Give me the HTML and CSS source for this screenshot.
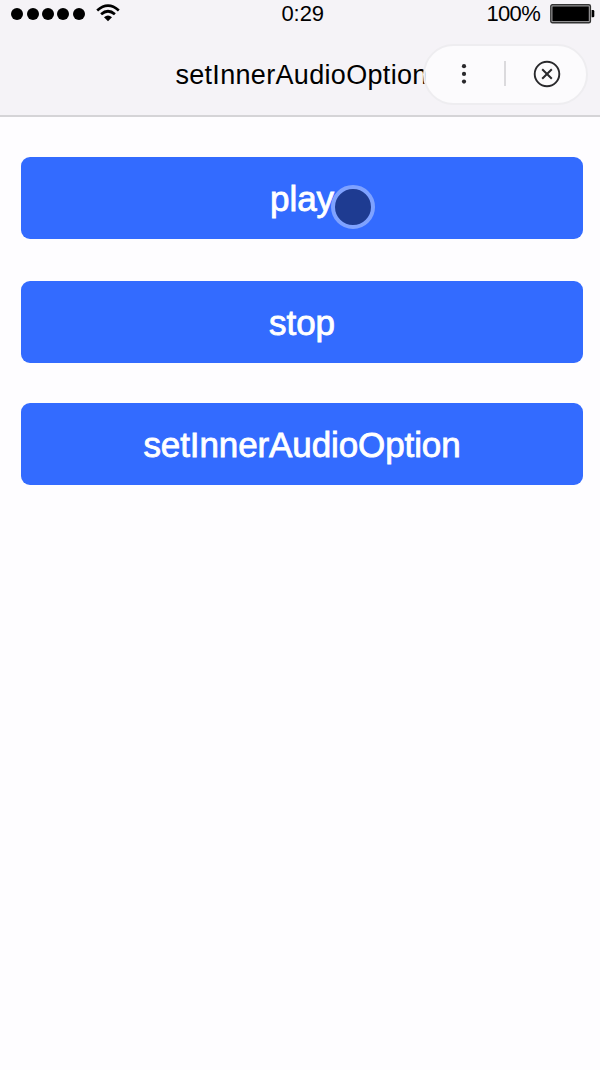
FILE: index.html
```html
<!DOCTYPE html>
<html lang="en">
<head>
  <meta charset="UTF-8">
  <meta name="viewport" content="width=device-width, initial-scale=1.0">
  <title>setInnerAudioOption</title>
  <link rel="stylesheet" href="styles.css">
</head>
<body>
  <header class="header">
    <!-- Status Bar -->
    <div class="status-bar">
      <div class="status-left">
        <div class="signal">
          <span class="signal-dot"></span>
          <span class="signal-dot"></span>
          <span class="signal-dot"></span>
          <span class="signal-dot"></span>
          <span class="signal-dot"></span>
        </div>
        <svg class="wifi" width="24" height="18" viewBox="0 0 24 18">
          <path d="M1.2 6.4 Q12 -3.2 22.8 6.4" fill="none" stroke="#000" stroke-width="2.7"/>
          <path d="M5.1 10.3 Q12 4.2 18.9 10.3" fill="none" stroke="#000" stroke-width="2.7"/>
          <path d="M8 13.2 Q12 9.8 16 13.2 L12 17.2 Z" fill="#000"/>
        </svg>
      </div>
      <div class="status-time">0:29</div>
      <div class="status-right">
        <span class="battery-text">100%</span>
        <svg class="battery" width="45" height="20" viewBox="0 0 45 20">
          <rect x="0.8" y="0.8" width="39.6" height="18" rx="1.5" fill="#b5b4b7" stroke="#333" stroke-width="1.4"/>
          <rect x="2.4" y="2.4" width="36.4" height="14.8" fill="#000"/>
          <path d="M41.6 6 H43 Q44.3 6 44.3 7.3 V12 Q44.3 13.3 43 13.3 H41.6 Z" fill="#000"/>
        </svg>
      </div>
    </div>

    <!-- Navigation Bar -->
    <div class="nav-bar">
      <h1 class="nav-title">setInnerAudioOption</h1>
      <div class="capsule">
        <svg width="6" height="22" viewBox="0 0 6 22">
          <circle cx="3" cy="3.2" r="2.1" fill="#29292c"/>
          <circle cx="3" cy="10.9" r="2.1" fill="#29292c"/>
          <circle cx="3" cy="18.6" r="2.1" fill="#29292c"/>
        </svg>
        <span class="capsule-line"></span>
        <svg width="28" height="28" viewBox="0 0 28 28" fill="none" stroke="#29292c">
          <circle cx="14" cy="14" r="12.3" stroke-width="1.9"/>
          <path d="M9.2 9.2 L18.8 18.8 M18.8 9.2 L9.2 18.8" stroke-width="2"/>
        </svg>
      </div>
    </div>
  </header>

  <main class="content">
    <button class="btn">play<span class="touch"></span></button>
    <button class="btn">stop</button>
    <button class="btn">setInnerAudioOption</button>
  </main>
</body>
</html>
```

FILE: styles.css
```css
* {
  margin: 0;
  padding: 0;
  box-sizing: border-box;
}

body {
  min-height: 1070px;
  background-color: #fefdff;
  font-family: "Liberation Sans", Arial, sans-serif;
  overflow: hidden;
}

.header {
  height: 117px;
  background-color: #f5f3f7;
  border-bottom: 2px solid #d5d4d7;
}

/* Status Bar */
.status-bar {
  display: grid;
  grid-template-columns: 1fr auto 1fr;
  height: 28px;
  padding: 0 6px 0 11.4px;
  align-items: center;
  font-size: 22px;
  line-height: 28px;
  color: #000;
}

.status-left {
  display: flex;
  align-items: center;
  gap: 11px;
}

.signal {
  display: flex;
  gap: 3.3px;
}

.signal-dot {
  width: 12px;
  height: 12px;
  border-radius: 50%;
  background-color: #000;
}

.wifi {
  margin-bottom: 3px;
}

.status-time {
  letter-spacing: -0.1px;
}

.status-right {
  display: flex;
  justify-content: flex-end;
  align-items: center;
  gap: 10px;
}

.battery {
  margin-right: -1px;
}

.battery-text {
  letter-spacing: -0.7px;
}

/* Navigation Bar */
.nav-bar {
  position: relative;
  height: 87px;
  padding: 28px 0 0 3px;
}

.nav-title {
  font-size: 27px;
  font-weight: normal;
  line-height: 38px;
  letter-spacing: 0.32px;
  text-align: center;
  color: #000;
}

/* Capsule lies over the end of the title */
.capsule {
  position: absolute;
  top: 16px;
  right: 12px;
  display: flex;
  justify-content: space-between;
  align-items: center;
  width: 165px;
  height: 61px;
  padding: 0 25px 2px 36px;
  border: 2px solid #eeedf0;
  border-radius: 31px;
  background-color: rgba(254, 253, 255, 0.75);
}

.capsule-line {
  width: 2px;
  height: 25px;
  margin-left: 10px;
  background-color: #dbdadd;
}

/* Buttons */
.content {
  display: flex;
  flex-direction: column;
  padding: 40px 17px 0 21px;
}

.btn {
  position: relative;
  height: 82px;
  margin-bottom: 42px;
  border: none;
  border-radius: 9px;
  background-color: #336bff;
  font-family: inherit;
  font-size: 35px;
  line-height: 84px;
  letter-spacing: -0.1px;
  color: #fff;
  -webkit-text-stroke: 0.8px #fff;
}

.btn:last-child {
  margin-top: -1.6px;
}

/* Touch point on the pressed button */
.touch {
  position: absolute;
  top: 28px;
  left: 309.5px;
  width: 44px;
  height: 44px;
  border: 4px solid #7fa2ff;
  border-radius: 50%;
  background-color: #1e3b91;
}
```
